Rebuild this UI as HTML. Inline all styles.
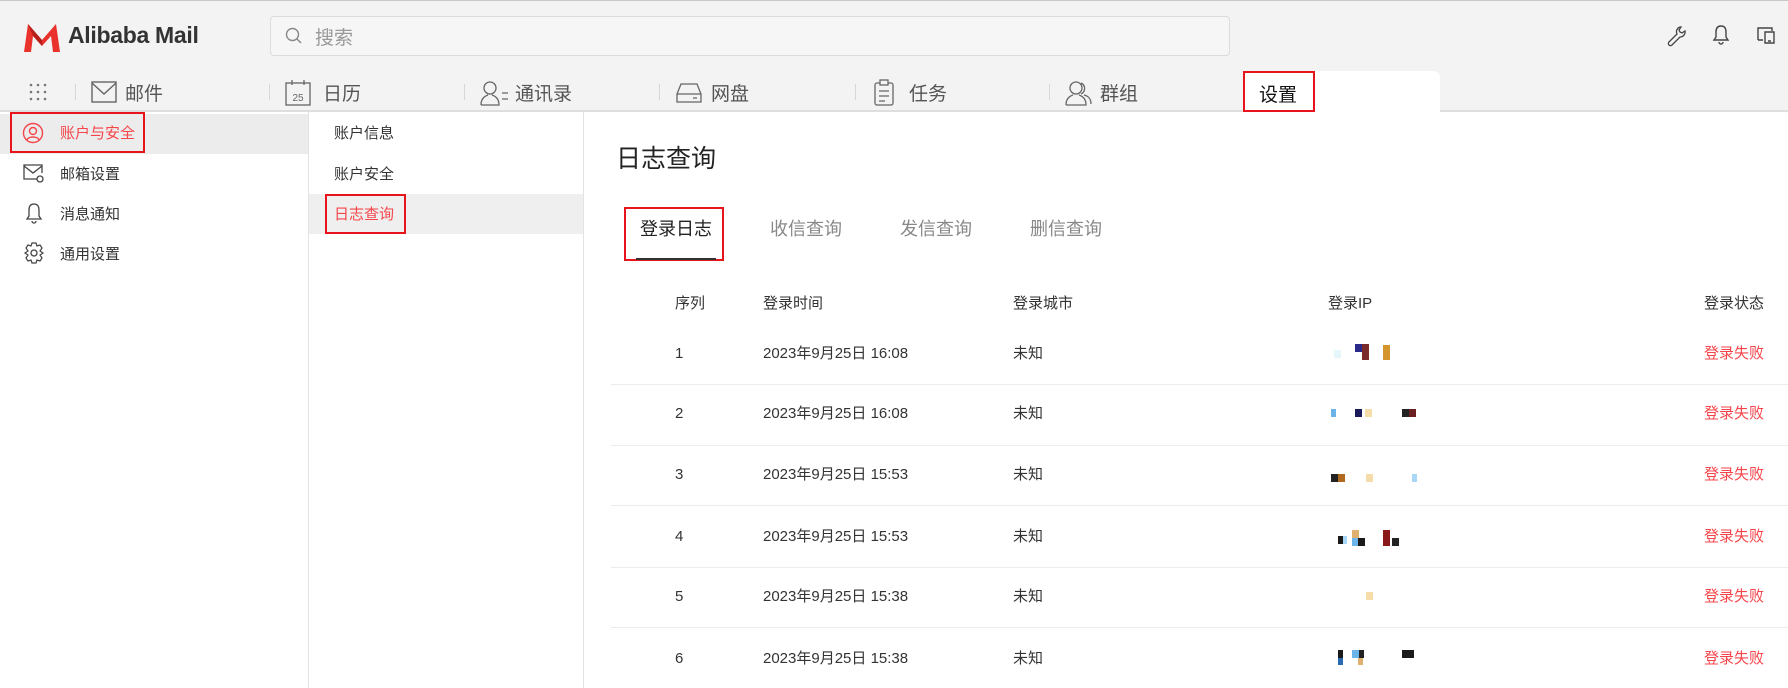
<!DOCTYPE html>
<html><head><meta charset="utf-8"><style>
*{margin:0;padding:0;box-sizing:border-box}
body{width:1788px;height:688px;overflow:hidden;background:#fff;font-family:"Liberation Sans","Noto Sans CJK SC",sans-serif;color:#333;position:relative}
.a{position:absolute;white-space:nowrap}
#top{position:absolute;left:0;top:0;width:1788px;height:112px;background:#f3f3f3;border-top:1px solid #c8c8c8;border-bottom:2px solid #dedede}
.nav{font-size:19px;color:#555;top:79px}
.sep{position:absolute;top:84px;width:1px;height:16px;background:#d8d8d8}
.ni{position:absolute;top:80px}
.side{font-size:15px;color:#333}
.th{font-size:15px;color:#333;top:293px;line-height:22px}
.td{font-size:15px;color:#333;line-height:22px;height:22px}
.rl{position:absolute;left:611px;right:0;height:1px;background:#ececec}
.red{color:#f5454a}
.ip{position:absolute;width:7px;height:11px}
</style></head><body>
<div id="top"></div>
<svg class="a" style="left:22px;top:22px" width="40" height="30" viewBox="0 0 40 30"><path d="M2 30 L6 2 L20 18 L34 2 L38 30 L31 30 L29 14 L20 24 L11 14 L9 30Z" fill="#e8322b"/><path d="M6 2 L20 18 L20 24 L11 14Z" fill="#b81f1a"/></svg>
<div class="a" style="left:68px;top:22px;font-size:23px;font-weight:bold;color:#333;letter-spacing:-0.3px">Alibaba Mail</div>
<div class="a" style="left:270px;top:16px;width:960px;height:40px;border:1px solid #dcdcdc;border-radius:4px;background:#f6f6f6"></div>
<svg class="a" style="left:285px;top:27px" width="18" height="18" viewBox="0 0 18 18"><circle cx="7.5" cy="7.5" r="6" fill="none" stroke="#888" stroke-width="1.4"/><path d="M12 12 L16 16" stroke="#888" stroke-width="1.4"/></svg>
<div class="a" style="left:315px;top:23px;font-size:19px;color:#999">搜索</div>
<svg class="a" style="left:1666px;top:25px" width="20" height="22" viewBox="0 0 20 22"><path d="M14 2 a5 5 0 0 0 -3 7 L3 17 a2 2 0 0 0 3 3 L14 12 a5 5 0 0 0 5 -6 l-3 2 -2 -1 -1 -2 2 -3Z" fill="none" stroke="#444" stroke-width="1.3"/></svg>
<svg class="a" style="left:1712px;top:24px" width="18" height="22" viewBox="0 0 18 22"><path d="M9 2 C5 2 4 5 4 8 L4 13 L2 16 L16 16 L14 13 L14 8 C14 5 13 2 9 2Z M7 18 a2 2 0 0 0 4 0" fill="none" stroke="#444" stroke-width="1.4"/></svg>
<svg class="a" style="left:1755px;top:25px" width="22" height="20" viewBox="0 0 22 20"><path d="M3 15 L3 3 L17 3 L17 6 M3 15 L8 15 M10 7 L19 7 L19 18 L10 18Z M13 16 L16 16" fill="none" stroke="#444" stroke-width="1.4"/></svg>
<svg class="a" style="left:28px;top:82px" width="20" height="20" viewBox="0 0 20 20" fill="#777"><circle cx="3" cy="3" r="1.3"/><circle cx="10" cy="3" r="1.3"/><circle cx="17" cy="3" r="1.3"/><circle cx="3" cy="10" r="1.3"/><circle cx="10" cy="10" r="1.3"/><circle cx="17" cy="10" r="1.3"/><circle cx="3" cy="17" r="1.3"/><circle cx="10" cy="17" r="1.3"/><circle cx="17" cy="17" r="1.3"/></svg>
<div class="sep" style="left:75px"></div><div class="sep" style="left:269px"></div><div class="sep" style="left:464px"></div><div class="sep" style="left:659px"></div><div class="sep" style="left:855px"></div><div class="sep" style="left:1049px"></div>
<svg class="ni" style="left:91px" width="26" height="24" viewBox="0 0 26 24"><rect x="1" y="2" width="24" height="20" fill="none" stroke="#666" stroke-width="1.4"/><path d="M1 3 L13 14 L25 3" fill="none" stroke="#666" stroke-width="1.4"/></svg>
<div class="a nav" style="left:125px">邮件</div>
<svg class="ni" style="left:285px;top:79px" width="26" height="27" viewBox="0 0 26 27"><rect x="1" y="4" width="24" height="22" fill="none" stroke="#666" stroke-width="1.3"/><path d="M7 1 L7 6 M19 1 L19 6" stroke="#666" stroke-width="1.3"/><text x="13" y="22" font-size="10" text-anchor="middle" fill="#666" font-family="Liberation Sans">25</text></svg>
<div class="a nav" style="left:323px">日历</div>
<svg class="ni" style="left:479px" width="30" height="26" viewBox="0 0 30 26"><path d="M11 2 a6 6 0 0 1 0 12 a6 6 0 0 1 0 -12Z M2 25 C2 18 6 16 9 15 M13 15 C16 16 20 18 20 25 L2 25" fill="none" stroke="#666" stroke-width="1.3"/><path d="M23 13 L29 13 M23 19 L29 19" stroke="#666" stroke-width="1.3"/></svg>
<div class="a nav" style="left:515px">通讯录</div>
<svg class="ni" style="left:675px;top:82px" width="28" height="22" viewBox="0 0 28 22"><path d="M2 12 L6 2 L22 2 L26 12 L26 20 L2 20Z M2 12 L26 12 M18 16 L22 16" fill="none" stroke="#666" stroke-width="1.3"/></svg>
<div class="a nav" style="left:711px">网盘</div>
<svg class="ni" style="left:873px;top:79px" width="22" height="27" viewBox="0 0 22 27"><rect x="2" y="4" width="18" height="22" rx="2" fill="none" stroke="#666" stroke-width="1.3"/><rect x="7" y="1" width="8" height="5" fill="#f3f3f3" stroke="#666" stroke-width="1.3"/><path d="M6 12 L16 12 M6 17 L16 17 M6 22 L12 22" stroke="#666" stroke-width="1.3"/></svg>
<div class="a nav" style="left:909px">任务</div>
<svg class="ni" style="left:1064px" width="30" height="26" viewBox="0 0 30 26"><path d="M12 2 a6 6 0 0 1 0 12 a6 6 0 0 1 0 -12Z M17 3 a6 6 0 0 1 0 11 M2 25 C2 18 6 16 9 15 M15 15 C18 16 22 18 22 25 L2 25 M20 15 C24 16 27 18 27 24" fill="none" stroke="#666" stroke-width="1.3"/></svg>
<div class="a nav" style="left:1100px">群组</div>
<div class="a" style="left:1243px;top:71px;width:197px;height:43px;background:#fff;border-radius:6px 6px 0 0"></div>
<div class="a" style="left:1243px;top:71px;width:72px;height:41px;border:2px solid #e8141b"></div>
<div class="a" style="left:1259px;top:80px;font-size:19px;color:#111">设置</div>
<div class="a" style="left:308px;top:112px;width:1px;height:576px;background:#e3e3e3"></div>
<div class="a" style="left:583px;top:112px;width:1px;height:576px;background:#e3e3e3"></div>
<div class="a" style="left:0;top:114px;width:308px;height:40px;background:#ececec"></div>
<div class="a" style="left:10px;top:112px;width:135px;height:41px;border:2px solid #e8141b"></div>
<svg class="a" style="left:22px;top:122px" width="22" height="22" viewBox="0 0 22 22"><circle cx="11" cy="11" r="9.5" fill="none" stroke="#f5454a" stroke-width="1.4"/><circle cx="11" cy="9" r="3.5" fill="none" stroke="#f5454a" stroke-width="1.4"/><path d="M5 18 C6 14 16 14 17 18" fill="none" stroke="#f5454a" stroke-width="1.4"/></svg>
<div class="a side red" style="left:60px;top:122px">账户与安全</div>
<svg class="a" style="left:23px;top:164px" width="22" height="20" viewBox="0 0 22 20"><path d="M14 15 L1 15 L1 1 L19 1 L19 9 M1 2 L10 9 L19 2" fill="none" stroke="#444" stroke-width="1.3"/><circle cx="17" cy="15" r="3" fill="none" stroke="#444" stroke-width="1.3"/></svg>
<div class="a side" style="left:60px;top:163px">邮箱设置</div>
<svg class="a" style="left:25px;top:202px" width="18" height="22" viewBox="0 0 18 22"><path d="M9 2 C5 2 4 5 4 8 L4 14 L2 17 L16 17 L14 14 L14 8 C14 5 13 2 9 2Z M7 19 a2 2 0 0 0 4 0" fill="none" stroke="#444" stroke-width="1.3"/></svg>
<div class="a side" style="left:60px;top:203px">消息通知</div>
<svg class="a" style="left:23px;top:242px" width="22" height="22" viewBox="0 0 22 22"><circle cx="11" cy="11" r="3" fill="none" stroke="#444" stroke-width="1.3"/><path d="M9 1 L13 1 L14 4 L17 3 L19 6 L17 9 L20 11 L17 13 L19 16 L17 19 L14 18 L13 21 L9 21 L8 18 L5 19 L3 16 L5 13 L2 11 L5 9 L3 6 L5 3 L8 4Z" fill="none" stroke="#444" stroke-width="1.2"/></svg>
<div class="a side" style="left:60px;top:243px">通用设置</div>
<div class="a side" style="left:334px;top:122px">账户信息</div>
<div class="a side" style="left:334px;top:163px">账户安全</div>
<div class="a" style="left:309px;top:194px;width:274px;height:40px;background:#efefef"></div>
<div class="a" style="left:325px;top:194px;width:81px;height:40px;border:2px solid #e8141b"></div>
<div class="a side red" style="left:334px;top:203px">日志查询</div>
<div class="a" style="left:616px;top:139px;font-size:25px;color:#222">日志查询</div>
<div class="a" style="left:624px;top:207px;width:100px;height:54px;border:2px solid #e8141b"></div>
<div class="a" style="left:636px;top:258px;width:80px;height:2px;background:#333"></div>
<div class="a" style="left:640px;top:215px;font-size:18px;color:#222">登录日志</div>
<div class="a" style="left:770px;top:215px;font-size:18px;color:#888">收信查询</div>
<div class="a" style="left:900px;top:215px;font-size:18px;color:#888">发信查询</div>
<div class="a" style="left:1030px;top:215px;font-size:18px;color:#888">删信查询</div>
<div class="a th" style="left:675px">序列</div>
<div class="a th" style="left:763px">登录时间</div>
<div class="a th" style="left:1013px">登录城市</div>
<div class="a th" style="left:1328px">登录IP</div>
<div class="a th" style="left:1704px">登录状态</div>

<div class="a td" style="left:675px;top:343px">1</div><div class="a td" style="left:763px;top:343px">2023年9月25日 16:08</div><div class="a td" style="left:1013px;top:343px">未知</div><div class="a td red" style="left:1704px;top:343px">登录失败</div>
<div class="rl" style="top:384px"></div>
<div class="a td" style="left:675px;top:403px">2</div><div class="a td" style="left:763px;top:403px">2023年9月25日 16:08</div><div class="a td" style="left:1013px;top:403px">未知</div><div class="a td red" style="left:1704px;top:403px">登录失败</div>
<div class="rl" style="top:445px"></div>
<div class="a td" style="left:675px;top:464px">3</div><div class="a td" style="left:763px;top:464px">2023年9月25日 15:53</div><div class="a td" style="left:1013px;top:464px">未知</div><div class="a td red" style="left:1704px;top:464px">登录失败</div>
<div class="rl" style="top:505px"></div>
<div class="a td" style="left:675px;top:526px">4</div><div class="a td" style="left:763px;top:526px">2023年9月25日 15:53</div><div class="a td" style="left:1013px;top:526px">未知</div><div class="a td red" style="left:1704px;top:526px">登录失败</div>
<div class="rl" style="top:567px"></div>
<div class="a td" style="left:675px;top:586px">5</div><div class="a td" style="left:763px;top:586px">2023年9月25日 15:38</div><div class="a td" style="left:1013px;top:586px">未知</div><div class="a td red" style="left:1704px;top:586px">登录失败</div>
<div class="rl" style="top:627px"></div>
<div class="a td" style="left:675px;top:648px">6</div><div class="a td" style="left:763px;top:648px">2023年9月25日 15:38</div><div class="a td" style="left:1013px;top:648px">未知</div><div class="a td red" style="left:1704px;top:648px">登录失败</div>

<div class="ip" style="left:1355px;top:344px;background:#2a2a8a;height:8px"></div><div class="ip" style="left:1362px;top:344px;background:#7a2a2a;height:16px"></div><div class="ip" style="left:1383px;top:345px;background:#d4962c;height:15px"></div><div class="ip" style="left:1334px;top:350px;background:#e6f6fb;height:8px"></div>
<div class="ip" style="left:1331px;top:409px;background:#6ab4ea;width:5px;height:8px"></div><div class="ip" style="left:1355px;top:409px;background:#1a1a5a;height:8px"></div><div class="ip" style="left:1365px;top:409px;background:#f5dca8;height:8px"></div><div class="ip" style="left:1402px;top:409px;background:#222;height:8px"></div><div class="ip" style="left:1409px;top:409px;background:#6a2020;height:8px"></div>
<div class="ip" style="left:1331px;top:474px;background:#222;height:8px"></div><div class="ip" style="left:1338px;top:474px;background:#b06a20;height:8px"></div><div class="ip" style="left:1366px;top:474px;background:#f5dca8;height:8px"></div><div class="ip" style="left:1412px;top:474px;background:#a8d8f5;height:8px;width:5px"></div>
<div class="ip" style="left:1338px;top:536px;background:#1a1a1a;height:8px"></div><div class="ip" style="left:1352px;top:530px;background:#e0b070;height:8px"></div><div class="ip" style="left:1352px;top:538px;background:#6ab4ea;height:8px"></div><div class="ip" style="left:1343px;top:536px;background:#a8d8f5;height:8px;width:4px"></div><div class="ip" style="left:1358px;top:538px;background:#1a1a1a;height:8px"></div><div class="ip" style="left:1383px;top:530px;background:#8a1a1a;height:16px"></div><div class="ip" style="left:1392px;top:538px;background:#222;height:8px"></div>
<div class="ip" style="left:1366px;top:592px;background:#f5dca8;height:8px"></div>
<div class="ip" style="left:1338px;top:650px;background:#1a1a1a;height:8px;width:5px"></div><div class="ip" style="left:1338px;top:658px;background:#2a6ab0;height:7px;width:5px"></div><div class="ip" style="left:1352px;top:650px;background:#6ab4ea;height:8px"></div><div class="ip" style="left:1359px;top:650px;background:#222;height:8px;width:5px"></div><div class="ip" style="left:1358px;top:658px;background:#e0b070;height:7px;width:5px"></div><div class="ip" style="left:1402px;top:650px;background:#1a1a1a;height:8px;width:12px"></div>
</body></html>
